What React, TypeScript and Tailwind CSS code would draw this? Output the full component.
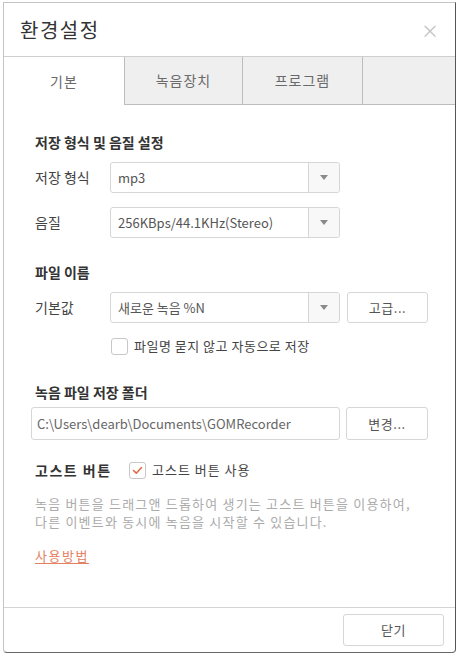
import React from "react";

const font = { fontFamily: '"Noto Sans CJK KR", "Noto Sans", sans-serif' };

function Caret() {
  return (
    <svg width="8" height="5" viewBox="0 0 8 5">
      <path d="M0 0 H8 L4 5 Z" fill="#8a8a8a" />
    </svg>
  );
}

function Select({ value }: { value: string }) {
  return (
    <div className="flex w-[230px] h-[31px] border border-[#d6d6d6] rounded-[3px] bg-white">
      <div className="flex-1 flex items-center pl-[7px] text-[13px] text-[#555]">{value}</div>
      <div className="w-[31px] flex items-center justify-center border-l border-[#d6d6d6] bg-[#f8f8f8] rounded-r-[3px]">
        <Caret />
      </div>
    </div>
  );
}

function Btn({ label, w = "w-[81px]" }: { label: string; w?: string }) {
  return (
    <div className={`${w} h-full flex items-center justify-center border border-[#d6d6d6] rounded-[3px] bg-white text-[13px] text-[#555] tracking-[0.5px]`}>
      {label}
    </div>
  );
}

export default function App() {
  return (
    <div className="w-[458px] h-[657px] bg-white pt-[2px] pl-[3px]" style={font}>
      <div className="w-[453px] h-[651px] flex flex-col border border-[#c4c4c4] border-r-[#555] border-b-[#666] rounded-b-[4px] bg-white">
        {/* header */}
        <div className="h-[54px] flex items-center justify-between pl-[16px] pr-[16px] border-b border-[#cfcfcf]">
          <span className="text-[20px] text-[#333] tracking-[1.5px]">환경설정</span>
          <span className="text-[18px] text-[#c2c2c2] leading-none">×</span>
        </div>

        {/* tabs */}
        <div className="flex h-[48px] text-[14px] text-[#6a6a6a] tracking-[1px]">
          <div className="w-[120px] flex items-center justify-center bg-white">기본</div>
          <div className="w-[118px] flex items-center justify-center bg-[#efefef] border-l border-b border-[#bdbdbd]">녹음장치</div>
          <div className="w-[120px] flex items-center justify-center bg-[#efefef] border-l border-b border-[#bdbdbd]">프로그램</div>
          <div className="flex-1 bg-[#efefef] border-l border-b border-[#bdbdbd]" />
        </div>

        {/* content */}
        <div className="flex-1 flex flex-col pl-[27px] text-[#444]">
          <div className="mt-[27px] pl-[4px] h-[20px] flex items-center text-[14px] font-bold text-[#333]">저장 형식 및 음질 설정</div>

          <div className="mt-[10px] flex items-center">
            <div className="w-[79px] pl-[4px] text-[14px]">저장 형식</div>
            <Select value="mp3" />
          </div>
          <div className="mt-[14px] flex items-center">
            <div className="w-[79px] pl-[4px] text-[14px]">음질</div>
            <Select value="256KBps/44.1KHz(Stereo)" />
          </div>

          <div className="mt-[24px] pl-[4px] h-[20px] flex items-center text-[14px] font-bold text-[#333]">파일 이름</div>
          <div className="mt-[10px] flex items-center h-[31px]">
            <div className="w-[79px] pl-[4px] text-[14px]">기본값</div>
            <Select value="새로운 녹음 %N" />
            <div className="ml-[7px] h-[31px]">
              <Btn label="고급..." />
            </div>
          </div>
          <div className="mt-[13px] h-[20px] flex items-center pl-[80px]">
            <div className="w-[17px] h-[17px] border border-[#c8c8c8] rounded-[3px] bg-white" />
            <span className="ml-[6px] text-[13px] text-[#444] tracking-[0.5px]">파일명 묻지 않고 자동으로 저장</span>
          </div>

          <div className="mt-[26px] pl-[4px] h-[20px] flex items-center text-[14px] font-bold text-[#333]">녹음 파일 저장 폴더</div>
          <div className="mt-[5px] flex items-center h-[33px]">
            <div className="w-[309px] h-[33px] flex items-center pl-[5px] border border-[#d6d6d6] rounded-[3px] text-[13px] text-[#666]">
              C:\Users\dearb\Documents\GOMRecorder
            </div>
            <div className="ml-[6px] h-[33px]">
              <Btn label="변경..." w="w-[82px]" />
            </div>
          </div>

          <div className="mt-[20px] h-[20px] flex items-center pl-[4px]">
            <span className="w-[94px] text-[14px] font-bold text-[#333] tracking-[1.5px]">고스트 버튼</span>
            <div className="w-[17px] h-[17px] border border-[#c8c8c8] rounded-[3px] bg-white flex items-center justify-center">
              <svg width="11" height="9" viewBox="0 0 11 9">
                <path d="M1.5 4.5 L4.3 7.2 L9.5 1.5" fill="none" stroke="#e0694a" strokeWidth="1.6" strokeLinecap="round" strokeLinejoin="round" />
              </svg>
            </div>
            <span className="ml-[6px] text-[13px] text-[#444] tracking-[1px]">고스트 버튼 사용</span>
          </div>

          <div className="mt-[15px] pl-[4px] text-[13px] leading-[18px] text-[#ababab] tracking-[1.2px]">
            <div>녹음 버튼을 드래그앤 드롭하여 생기는 고스트 버튼을 이용하여,</div>
            <div>다른 이벤트와 동시에 녹음을 시작할 수 있습니다.</div>
          </div>

          <div className="mt-[15px] pl-[4px] h-[20px] flex items-center">
            <span className="text-[13px] text-[#e5805f] underline underline-offset-2 tracking-[1.5px]">사용방법</span>
          </div>
        </div>

        {/* footer */}
        <div className="h-[45px] border-t border-[#d4d4d4] flex items-start justify-end pr-[11px] pt-[6px]">
          <div className="h-[32px]">
            <Btn label="닫기" w="w-[101px]" />
          </div>
        </div>
      </div>
    </div>
  );
}
